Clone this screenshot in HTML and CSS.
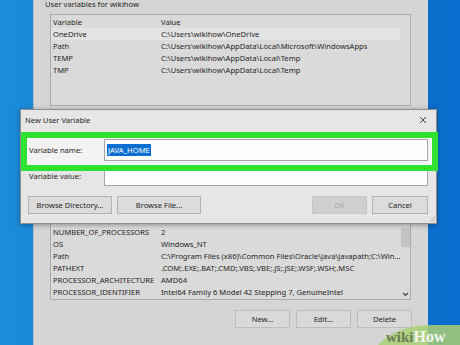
FILE: index.html
```html
<!DOCTYPE html>
<html lang="en">
<head>
    <meta charset="UTF-8">
    <title>New User Variable</title>
    <link rel="stylesheet" href="styles.css">
</head>
<body>

<div class="desktop">
    <!-- Environment Variables window (behind) -->
    <div class="env-window">
        <div class="group-title">User variables for wikihow</div>
        <div class="list user-list">
            <div class="list-row list-head"><span class="col-name">Variable</span><span>Value</span></div>
            <div class="list-row selected"><span class="col-name">OneDrive</span><span>C:\Users\wikihow\OneDrive</span></div>
            <div class="list-row"><span class="col-name">Path</span><span>C:\Users\wikihow\AppData\Local\Microsoft\WindowsApps</span></div>
            <div class="list-row"><span class="col-name">TEMP</span><span>C:\Users\wikihow\AppData\Local\Temp</span></div>
            <div class="list-row"><span class="col-name">TMP</span><span>C:\Users\wikihow\AppData\Local\Temp</span></div>
        </div>

        <!-- system variables: the top of this list is covered by the dialog -->
        <div class="list sys-list">
            <div class="list-rows">
                <div class="list-row"><span class="col-name">NUMBER_OF_PROCESSORS</span><span>2</span></div>
                <div class="list-row"><span class="col-name">OS</span><span>Windows_NT</span></div>
                <div class="list-row"><span class="col-name">Path</span><span>C:\Program Files (x86)\Common Files\Oracle\Java\javapath;C:\Win...</span></div>
                <div class="list-row"><span class="col-name">PATHEXT</span><span>.COM;.EXE;.BAT;.CMD;.VBS;.VBE;.JS;.JSE;.WSF;.WSH;.MSC</span></div>
                <div class="list-row"><span class="col-name">PROCESSOR_ARCHITECTURE</span><span>AMD64</span></div>
                <div class="list-row"><span class="col-name">PROCESSOR_IDENTIFIER</span><span>Intel64 Family 6 Model 42 Stepping 7, GenuineIntel</span></div>
            </div>
            <div class="scrollbar">
                <div class="thumb"></div>
                <svg class="chevron" width="7" height="5" viewBox="0 0 7 5"><path d="M1 1 L3.5 3.5 L6 1" fill="none" stroke="#444" stroke-width="1.2"/></svg>
            </div>
        </div>

        <div class="button-row">
            <button class="win-btn">New...</button>
            <button class="win-btn">Edit...</button>
            <button class="win-btn">Delete</button>
        </div>
    </div>

    <!-- New User Variable dialog -->
    <div class="dialog">
        <div class="dialog-title">
            <span>New User Variable</span>
            <svg class="close" width="8" height="8" viewBox="0 0 8 8"><path d="M1 1 L7 7 M7 1 L1 7" stroke="#333" stroke-width="0.9"/></svg>
        </div>
        <div class="dialog-body">
            <div class="field-row highlight">
                <label class="field-label">Variable name:</label>
                <div class="field-input name-input"><span class="sel-text">JAVA_HOME</span></div>
            </div>
            <div class="field-row value-row">
                <label class="field-label">Variable value:</label>
                <div class="field-input"></div>
            </div>
            <div class="dialog-buttons">
                <button class="dlg-btn wide">Browse Directory...</button>
                <button class="dlg-btn wide">Browse File...</button>
                <span class="spacer"></span>
                <button class="dlg-btn disabled">OK</button>
                <button class="dlg-btn">Cancel</button>
            </div>
        </div>
        <svg class="grip" width="6" height="6" viewBox="0 0 6 6"><circle cx="5" cy="1" r="0.6" fill="#999"/><circle cx="3" cy="3" r="0.6" fill="#999"/><circle cx="5" cy="3" r="0.6" fill="#999"/><circle cx="1" cy="5" r="0.6" fill="#999"/><circle cx="3" cy="5" r="0.6" fill="#999"/><circle cx="5" cy="5" r="0.6" fill="#999"/></svg>
    </div>

    <!-- watermark -->
    <div class="wikihow-mark"><span class="wiki">wiki</span><span class="how">How</span></div>
</div>

</body>
</html>
```

FILE: styles.css
```css
* {
    margin: 0;
    padding: 0;
    box-sizing: border-box;
}

body {
    font-family: 'Noto Sans', sans-serif;
    font-size: 7.6px;
    color: #1e1e1e;
}

.desktop {
    position: relative;
    width: 460px;
    height: 345px;
    overflow: hidden;
    background: linear-gradient(90deg, #1c8cd9 0%, #1482d4 40%, #0a6ccc 100%);
}

/* Environment Variables window */
.env-window {
    display: flex;
    flex-direction: column;
    width: 395px;
    height: 350px;
    margin: -2px 0 0 33px;
    padding: 0 17px 0 16px;
    background: #d5d5d5;
    border-left: 1px solid #b8b8b8;
}

.group-title {
    line-height: 12px;
    margin-left: -5px;
}

.list {
    background: #dadada;
    border: 1px solid #ababab;
}

.user-list {
    margin-top: 4px;
    height: 92px;
    padding-top: 1px;
}

.list-row {
    display: flex;
    height: 12px;
    line-height: 12px;
    padding-left: 2px;
    white-space: nowrap;
}

.list-row.selected {
    background: #e3e3e3;
    margin-right: 10px;
}

.col-name {
    width: 108px;
    flex-shrink: 0;
}

.sys-list {
    display: flex;
    margin-top: 19px;
    height: 175px;
}

.list-rows {
    flex: 1;
    display: flex;
    flex-direction: column;
    justify-content: flex-end;
    padding-bottom: 1px;
    overflow: hidden;
}

.scrollbar {
    width: 10px;
    display: flex;
    flex-direction: column;
    align-items: center;
}

.thumb {
    width: 9px;
    height: 19px;
    margin-top: 102px;
    background: #c3c3c3;
}

.chevron {
    margin-top: auto;
    margin-bottom: 2px;
}

.button-row {
    display: flex;
    justify-content: flex-end;
    gap: 6px;
    margin-top: 10px;
    margin-right: -1px;
}

.win-btn {
    width: 55px;
    height: 18px;
    font-family: inherit;
    font-size: 7.6px;
    color: #1e1e1e;
    background: #d9d9d9;
    border: 1px solid #bdbdbd;
}

/* Dialog */
.dialog {
    position: absolute;
    left: 20px;
    top: 109px;
    width: 417px;
    padding-bottom: 9px;
    background: #e6e6e6;
    border: 1px solid #8e8e8e;
    box-shadow: 0 1px 5px rgba(0, 0, 0, 0.35);
}

.dialog-title {
    display: flex;
    align-items: center;
    justify-content: space-between;
    height: 20px;
    padding: 0 9px 0 4px;
}

.dialog-body {
    padding: 0 8px;
}

.field-row {
    display: flex;
    align-items: center;
}

.field-label {
    width: 75px;
    flex-shrink: 0;
}

.field-input {
    flex: 1;
    height: 20px;
    background: #fdfdfd;
    border: 1px solid #a5a5a5;
    display: flex;
    align-items: center;
    padding-left: 2px;
}

.highlight {
    position: relative;
    z-index: 1;
    margin: 2px -10px 0 -8px;
    padding: 1px 4px 4px 2px;
    border: 6px solid #2fe22f;
    background: #f3f3f3;
    box-shadow: inset 0 0 3px #ffffff;
}

.name-input {
    height: 22px;
}

.sel-text {
    background: #0a6fd0;
    color: #ffffff;
    line-height: 12px;
    padding: 0 1px;
}

.value-row {
    margin-top: -5px;
}

.dialog-buttons {
    display: flex;
    gap: 5px;
    margin-top: 10px;
    margin-left: -1px;
}

.spacer {
    flex: 1;
}

.dlg-btn {
    width: 56px;
    height: 18px;
    font-family: inherit;
    font-size: 7.6px;
    color: #1e1e1e;
    background: #dcdcdc;
    border: 1px solid #b3b3b3;
}

.dlg-btn.wide {
    width: 84px;
}

.dlg-btn.disabled {
    width: 55px;
    color: #a5a5a5;
    background: #cfcfcf;
    border-color: #c6c6c6;
}

.grip {
    position: absolute;
    right: 1px;
    bottom: 1px;
}

/* watermark */
.wikihow-mark {
    position: absolute;
    left: 370px;
    top: 325px;
    width: 120px;
    height: 40px;
    padding: 4px 0 0 16px;
    border-top-left-radius: 60px 40px;
    background: rgba(168, 208, 118, 0.85);
    font-family: 'Liberation Serif', serif;
    font-weight: bold;
    font-size: 15px;
    line-height: 16px;
}

.wiki {
    color: #6a7a58;
}

.how {
    color: #f2f6ee;
    font-size: 16px;
}
```
